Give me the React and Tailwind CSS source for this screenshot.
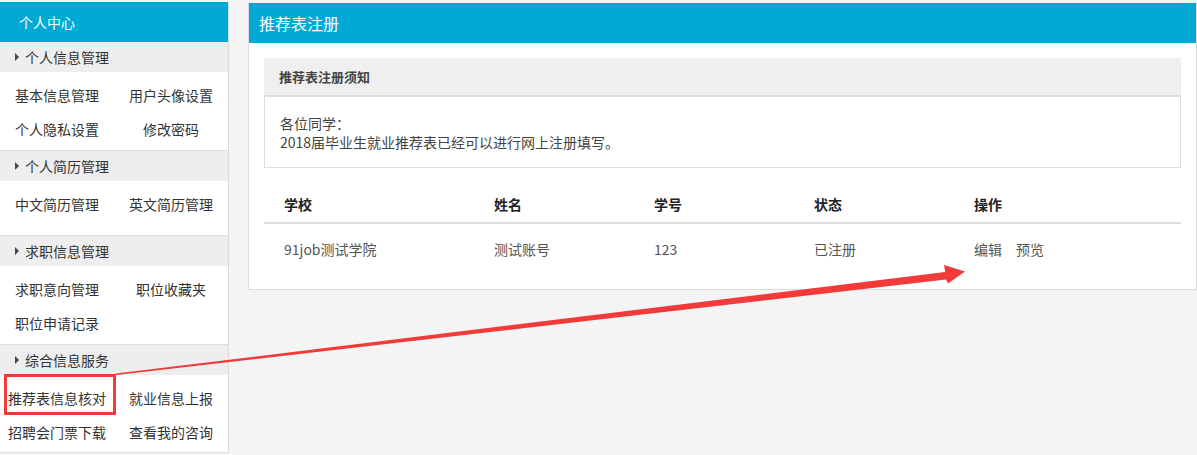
import React from "react";

const font = { fontFamily: '"Microsoft YaHei", "Noto Sans CJK SC", "Noto Sans", sans-serif' };

function SectionHeader({ title, first }) {
  return (
    <div className={`bg-[#eeeeee] flex items-center pl-[15px] text-[14px] text-[#333] ${first ? "h-[30px]" : "h-[31px] border-t border-[#dddddd]"}`}>
      <span className="w-0 h-0 border-y-[4px] border-y-transparent border-l-[4px] border-l-[#444] mr-[6px]"></span>
      <span>{title}</span>
    </div>
  );
}

function Items({ rows, className }) {
  return (
    <div className={`bg-white pt-[6px] ${className}`}>
      {rows.map((r, i) => (
        <div key={i} className="grid grid-cols-2 h-[34px] items-center text-[14px] text-[#333]">
          {r.map((t, j) => (
            <div key={j} className="text-center whitespace-nowrap">{t}</div>
          ))}
        </div>
      ))}
    </div>
  );
}

export default function App() {
  return (
    <div className="relative min-h-[455px] w-[1197px] bg-[#f4f4f4] flex items-start overflow-hidden" style={font}>
      <aside className="w-[229px] mt-[2px] border-r border-[#dddddd] border-b bg-white">
        <div className="h-[40px] bg-[#00aad5] text-white text-[14px] flex items-center pl-[19px]">个人中心</div>
        <SectionHeader title="个人信息管理" first />
        <Items className="h-[78px]" rows={[["基本信息管理", "用户头像设置"], ["个人隐私设置", "修改密码"]]} />
        <SectionHeader title="个人简历管理" />
        <Items className="h-[54px]" rows={[["中文简历管理", "英文简历管理"]]} />
        <SectionHeader title="求职信息管理" />
        <Items className="h-[78px]" rows={[["求职意向管理", "职位收藏夹"], ["职位申请记录", ""]]} />
        <SectionHeader title="综合信息服务" />
        <Items className="h-[77px]" rows={[["推荐表信息核对", "就业信息上报"], ["招聘会门票下载", "查看我的咨询"]]} />
      </aside>

      <main className="ml-[19px] mt-[3px] flex-1 bg-white border border-[#dddddd] border-t-0 h-[287px]">
        <div className="h-[40px] bg-[#00aad5] text-white text-[16px] flex items-center pl-[10px]">推荐表注册</div>
        <div className="mx-[15px] mt-[15px]">
          <div className="h-[39px] bg-[#efefef] border-b-2 border-[#dddddd] flex items-center pl-[15px] text-[13px] font-bold text-[#444]">推荐表注册须知</div>
          <div className="border border-t-0 border-[#dddddd] h-[71px] pl-[15px] pt-[17px] text-[14px] text-[#444] leading-[19px]">
            <div>各位同学：</div>
            <div>2018届毕业生就业推荐表已经可以进行网上注册填写。</div>
          </div>
          <div className="mt-[19px]">
            <div className="grid grid-cols-[210px_160px_160px_160px_1fr] h-[37px] items-center border-b-2 border-[#dddddd] text-[14px] font-bold text-[#222]">
              <div className="pl-[20px]">学校</div>
              <div className="pl-[20px]">姓名</div>
              <div className="pl-[20px]">学号</div>
              <div className="pl-[20px]">状态</div>
              <div className="pl-[20px]">操作</div>
            </div>
            <div className="grid grid-cols-[210px_160px_160px_160px_1fr] h-[50px] items-center text-[14px] text-[#555]">
              <div className="pl-[20px]">91job测试学院</div>
              <div className="pl-[20px]">测试账号</div>
              <div className="pl-[20px]">123</div>
              <div className="pl-[20px]">已注册</div>
              <div className="pl-[20px] flex gap-[14px]"><span>编辑</span><span>预览</span></div>
            </div>
          </div>
        </div>
      </main>

      <div className="absolute left-[4px] top-[374px] w-[112px] h-[41px] border-[3px] border-[#f23a3a] pointer-events-none"></div>
      <svg className="absolute left-0 top-0 pointer-events-none" width="1197" height="455" viewBox="0 0 1197 455">
        <polygon
          fill="#f23a3a"
          points="115.9,373.6 116.1,375.0 946.0,279.5 948.0,283.5 965,271.5 944.0,265.0 945.2,272.0"
        />
      </svg>
    </div>
  );
}
